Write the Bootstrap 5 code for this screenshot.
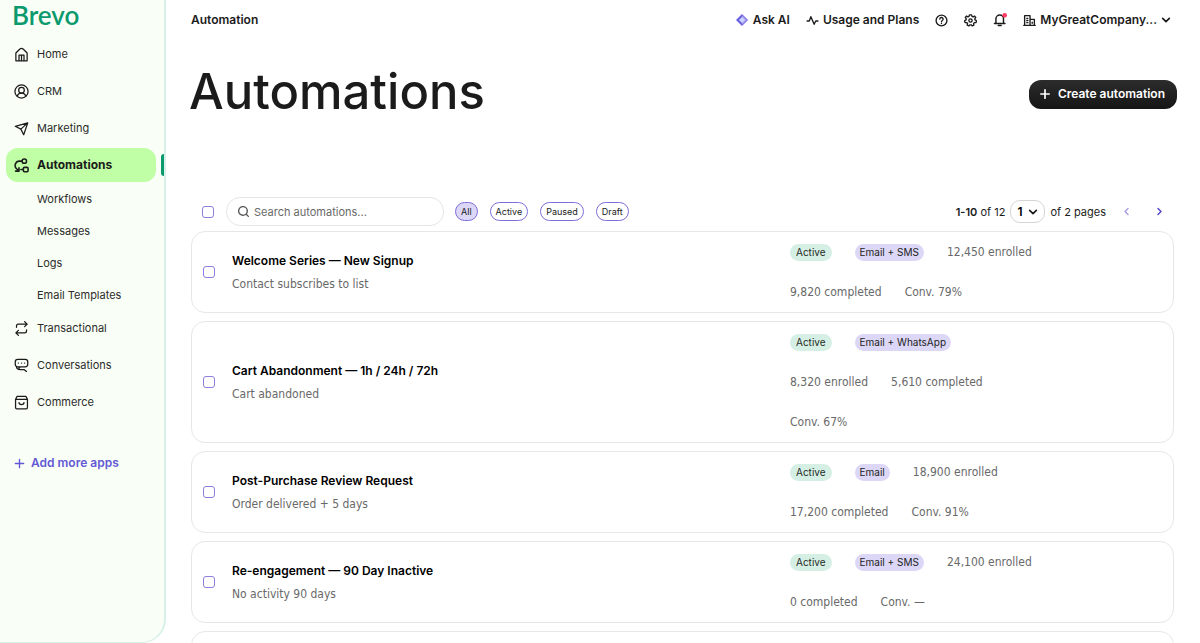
<!DOCTYPE html>
<html lang="en">
<head>
<meta charset="utf-8">
<meta name="viewport" content="width=device-width, initial-scale=1">
<title>Automations</title>
<link href="https://cdn.jsdelivr.net/npm/bootstrap@5.3.0/dist/css/bootstrap.min.css" rel="stylesheet">
<style>
:root { --ink: #1b1b1b; --violet: #6358d4; --green: #0b996e; --grey: #696969; }
body { font-family: Inter, sans-serif; font-size: 12px; line-height: 16px; color: var(--ink); background: #fff; }
a { color: inherit; text-decoration: none; }
button { color: inherit; }
svg { flex: none; display: block; }
.ico { fill: none; stroke: currentColor; stroke-width: 2; stroke-linecap: round; stroke-linejoin: round; }
.ico-bold { stroke-width: 2.5; }
.shell { height: 100vh; }
.sidebar { width: 166px; flex: none; background: #f9fff6; border: solid #d8f1e8; border-width: 0 2px 1px 0; border-radius: 0 0 24px 0; }
.brand { font: 600 26px/30px Lato, sans-serif; color: var(--green); padding-left: 12px; margin-bottom: 7px; }
.side-link { height: 34px; margin: 0 8px 3px 6px; padding: 0 8px; border-radius: 12px; display: flex; align-items: center; gap: 8px; font-size: 11px; color: #2b2b2b; }
.side-link svg { color: var(--ink); }
.side-link.current { background: #c0ffa5; font-weight: 700; font-size: 12px; color: var(--ink); margin-bottom: 0; }
.current-wrap { position: relative; margin: 1px 0; }
.current-wrap::after { content: ""; position: absolute; right: 0; top: 6px; width: 3px; height: 22px; background: var(--green); border-radius: 3px 0 0 3px; }
.sub-link { height: 32px; padding-left: 37px; display: flex; align-items: center; font-size: 11px; color: #2b2b2b; }
.add-apps { color: var(--violet); font-weight: 600; margin-top: 36px; padding-left: 14px; gap: 6px; }
.main { overflow: auto; scrollbar-width: none; padding: 0 23px 0 25px; }
.main::-webkit-scrollbar { display: none; }
.topbar { height: 40px; font-weight: 600; padding-right: 6px; }
.topbar button { font-weight: 600; }
.plain { border: 0; background: none; padding: 0; display: flex; align-items: center; }
.title-row { padding-top: 24px; }
.page-title { font-size: 49px; line-height: 56px; font-weight: 500; margin: 0 0 4px -2px; }
.btn-create { background: linear-gradient(#2c2c2c, #151515); color: #fff; font-size: 12px; line-height: 16px; font-weight: 600; border: 0; border-radius: 12px; padding: 6px 12px 6px 11px; height: 29px; }
.btn-create:hover { background: #333; color: #fff; }
.list-area { margin-top: 73px; padding-right: 3px; }
.toolbar { padding: 0 2px 0 11px; margin-bottom: 5px; }
.tick { width: 12px; height: 12px; margin: 0; border: 1px solid #8c80dd; border-radius: 3px; min-height: 0; flex: none; }
.search { width: 218px; height: 29px; border: 1px solid #e5e5e5; border-radius: 14px; padding: 0 10px; margin-left: 12px; color: #555; }
.search input { border: 0; outline: 0; background: none; padding: 0; font-size: 11px; width: 100%; }
.search input::placeholder { color: var(--grey); opacity: 1; }
.filters { gap: 12px; margin-left: 11px; }
.filter { border: 1px solid #7b70d8; border-radius: 10px; background: #fff; height: 19px; font-size: 9px; line-height: 16px; padding: 0 5px; }
.filter.on { background: #dcd7f7; }
.pager { font-size: 11px; }
.page-pick { width: 35px; height: 23px; border: 1px solid #d5d5d5; border-radius: 10px; background: #fff; font-weight: 600; font-size: 12px; padding-left: 6px; appearance: none; }
.pick-wrap { position: relative; margin: 0 5px; }
.pick-wrap svg { position: absolute; right: 7px; top: 7px; pointer-events: none; }
.pager .prev { color: #a9a0e6; }
.pager .next { color: #5348c8; }
.flow { border: 1px solid #e7e7e7; border-radius: 14px; min-height: 82px; padding: 0 11px; gap: 17px; }
.flow-name { font-size: 12px; line-height: 24px; font-weight: 600; margin: 0; color: #000; }
.flow-trigger, .stat { font-family: "DejaVu Sans Condensed", "DejaVu Sans", sans-serif; font-size: 12px; color: var(--grey); }
.flow-trigger { line-height: 22px; margin: 0; }
.facts { width: 250px; flex: none; column-gap: 23px; row-gap: 16px; padding: 8px 0; margin-right: 122px; }
.facts > * { height: 24px; display: flex; align-items: center; }
.tag { font-size: 10px; line-height: 17px; border-radius: 9px; padding: 0 5px; color: #1f2b27; }
.tag-on { background: #d6efe5; padding: 0 6px; }
.tag-channel { background: #dcd7f7; color: #222; }
</style>
</head>
<body>
<div class="shell d-flex">
  <aside class="sidebar">
    <div class="brand"><a href="#">Brevo</a></div>
    <nav aria-label="Apps">
      <a class="side-link" href="#"><svg class="ico" width="15" height="15" viewBox="0 0 24 24"><path d="M3 9.500 9 3.500q3-2.500 6 0l6 6V22H3zM8 22v-9h8v9M12 13v9"/></svg>Home</a>
      <a class="side-link" href="#"><svg class="ico" width="15" height="15" viewBox="0 0 24 24"><circle cx="12" cy="12" r="10.500"/><circle cx="12" cy="10" r="4.500"/><path d="M5 19c1.500-3 4-4.500 7-4.500s5.500 1.500 7 4.500"/></svg>CRM</a>
      <a class="side-link" href="#"><svg class="ico" width="15" height="15" viewBox="0 0 24 24"><path d="M22 3 2 8.500l9 4.500 4.500 9zM22 3 11 13"/></svg>Marketing</a>
      <div class="current-wrap">
        <a class="side-link current" href="#" aria-current="page"><svg class="ico ico-bold" width="15" height="15" viewBox="0 0 24 24"><circle cx="16.500" cy="5" r="3.500"/><rect x="15" y="15" width="7.500" height="7" rx="1.500"/><path d="M13 5H9a7 7 0 0 0-4.500 12.500L8 21M8 15.500V21H2.500M11 18.500h4"/></svg>Automations</a>
      </div>
      <a class="sub-link" href="#">Workflows</a>
      <a class="sub-link" href="#">Messages</a>
      <a class="sub-link" href="#">Logs</a>
      <a class="sub-link" href="#">Email Templates</a>
      <a class="side-link" href="#"><svg class="ico" width="15" height="15" viewBox="0 0 24 24"><path d="M4 10V8a3 3 0 0 1 3-3h14M17 1l4 4-4 4M20 14v2a3 3 0 0 1-3 3H3M7 15l-4 4 4 4"/></svg>Transactional</a>
      <a class="side-link" href="#"><svg class="ico" width="15" height="15" viewBox="0 0 24 24"><path d="M6 2h12a4 4 0 0 1 4 4v4a4 4 0 0 1-4 4H6a4 4 0 0 1-4-4V6a4 4 0 0 1 4-4zM4 14c0 4 3 4.500 6 4.500h6l4 3M10 14.500c-2 0-3 2-1 4M7 8h.1M12 8h.1M17 8h.1"/></svg>Conversations</a>
      <a class="side-link" href="#"><svg class="ico" width="15" height="15" viewBox="0 0 24 24"><path d="M2.500 7 5 2h14l2.500 5v13a2 2 0 0 1-2 2h-15a2 2 0 0 1-2-2zM2.500 7h19M8 12c0 4.500 8 4.500 8 0"/></svg>Commerce</a>
      <a class="add-apps d-flex align-items-center" href="#"><svg class="ico" width="11" height="11" viewBox="0 0 16 16"><path d="M8 2v12M2 8h12"/></svg>Add more apps</a>
    </nav>
  </aside>

  <main class="main flex-grow-1">
    <header class="topbar d-flex align-items-center justify-content-between">
      <span>Automation</span>
      <div class="d-flex align-items-center gap-3">
        <button class="plain gap-1" type="button"><svg width="14" height="14" viewBox="0 0 14 14"><path d="m7 1 6 6-6 6-6-6z" fill="#6a5fe0"/><path d="m7 2 5 5-5 5z" fill="#a79cf0"/><path d="m7 4 3 3-3 3-3-3z" fill="#c9d5ff"/></svg>Ask AI</button>
        <button class="plain gap-1" type="button"><svg class="ico ico-bold" width="13" height="13" viewBox="0 0 24 24"><path d="M2 13h4L9 5l6 14 3-6h4"/></svg>Usage and Plans</button>
        <button class="plain" type="button" aria-label="Help"><svg class="ico ico-bold" width="13" height="13" viewBox="0 0 24 24"><circle cx="12" cy="12" r="10"/><path d="M9 9.500a3 3 0 1 1 4.500 2.500q-1.500.8-1.500 2.500M12 17.500v.1"/></svg></button>
        <button class="plain" type="button" aria-label="Settings"><svg class="ico ico-bold" width="13" height="13" viewBox="0 0 24 24"><path d="m10 1.500-.8 3-2 .9-2.800-1.600-2 2.500L4.200 9l-.6 2-2.600 1.500 1 3.200 3 .1 1.500 1.700-.5 3 3 1.500 2.200-2h2l2 2 3-1.500-.4-3 1.400-1.700 3-.1 1-3.200L20.500 11l-.6-2 1.700-2.700-2-2.500-2.800 1.600-2-.9-.8-3z"/><circle cx="12" cy="12" r="3"/></svg></button>
        <button class="plain" type="button" aria-label="Notifications"><svg width="14" height="14" viewBox="0 0 24 24"><path class="ico ico-bold" d="M2.500 18h18M5 18V10a6.500 6.500 0 0 1 13 0v8M9 21.500h5"/><circle cx="20" cy="4" r="4" fill="#ff3b62"/></svg></button>
        <button class="plain gap-1" type="button"><svg class="ico ico-bold" width="13" height="13" viewBox="0 0 24 24"><path d="M3 21V3h10v18M13 10h8v11M1.500 21h21M7 8h2M7 12h2M7 16h2M17 15v2"/></svg><span>MyGreatCompany...</span><svg class="ico" width="10" height="10" viewBox="0 0 12 12"><path d="m2 4 4 4 4-4"/></svg></button>
      </div>
    </header>

    <div class="title-row d-flex align-items-center justify-content-between">
      <h1 class="page-title">Automations</h1>
      <button class="btn btn-create d-flex align-items-center gap-2" type="button"><svg class="ico" width="10" height="10" viewBox="0 0 12 12"><path d="M6 1v10M1 6h10"/></svg>Create automation</button>
    </div>

    <section class="list-area">
      <div class="toolbar d-flex align-items-center">
        <input class="form-check-input tick" type="checkbox" aria-label="Select all">
        <label class="search d-flex align-items-center gap-1"><svg class="ico ico-bold" width="13" height="13" viewBox="0 0 24 24"><circle cx="11" cy="11" r="8"/><path d="m17 17 4 4"/></svg><input type="text" placeholder="Search automations..." aria-label="Search automations"></label>
        <div class="filters d-flex">
          <button class="filter on" type="button">All</button>
          <button class="filter" type="button">Active</button>
          <button class="filter" type="button">Paused</button>
          <button class="filter" type="button">Draft</button>
        </div>
        <div class="pager d-flex align-items-center ms-auto">
          <span><b class="fw-semibold">1-10</b> of 12</span>
          <span class="pick-wrap"><select class="page-pick" aria-label="Page"><option>1</option><option>2</option></select><svg class="ico" width="10" height="10" viewBox="0 0 12 12"><path d="m2 4 4 4 4-4"/></svg></span>
          <span>of 2 pages</span>
          <button class="plain prev ms-3" type="button" aria-label="Previous page"><svg class="ico" width="9" height="9" viewBox="0 0 12 12"><path d="M8 2 4 6l4 4"/></svg></button>
          <button class="plain next ms-4 me-2" type="button" aria-label="Next page"><svg class="ico" width="9" height="9" viewBox="0 0 12 12"><path d="m4 2 4 4-4 4"/></svg></button>
        </div>
      </div>

      <div class="d-flex flex-column gap-2">
        <article class="flow d-flex align-items-center">
          <input class="form-check-input tick" type="checkbox" aria-label="Select Welcome Series">
          <div class="flex-grow-1"><h2 class="flow-name">Welcome Series — New Signup</h2><p class="flow-trigger">Contact subscribes to list</p></div>
          <div class="facts d-flex flex-wrap"><span><span class="tag tag-on">Active</span></span><span><span class="tag tag-channel">Email + SMS</span></span><span class="stat">12,450 enrolled</span><span class="stat">9,820 completed</span><span class="stat">Conv. 79%</span></div>
        </article>
        <article class="flow d-flex align-items-center">
          <input class="form-check-input tick" type="checkbox" aria-label="Select Cart Abandonment">
          <div class="flex-grow-1"><h2 class="flow-name">Cart Abandonment — 1h / 24h / 72h</h2><p class="flow-trigger">Cart abandoned</p></div>
          <div class="facts d-flex flex-wrap"><span><span class="tag tag-on">Active</span></span><span><span class="tag tag-channel">Email + WhatsApp</span></span><span class="stat">8,320 enrolled</span><span class="stat">5,610 completed</span><span class="stat">Conv. 67%</span></div>
        </article>
        <article class="flow d-flex align-items-center">
          <input class="form-check-input tick" type="checkbox" aria-label="Select Post-Purchase Review Request">
          <div class="flex-grow-1"><h2 class="flow-name">Post-Purchase Review Request</h2><p class="flow-trigger">Order delivered + 5 days</p></div>
          <div class="facts d-flex flex-wrap"><span><span class="tag tag-on">Active</span></span><span><span class="tag tag-channel">Email</span></span><span class="stat">18,900 enrolled</span><span class="stat">17,200 completed</span><span class="stat">Conv. 91%</span></div>
        </article>
        <article class="flow d-flex align-items-center">
          <input class="form-check-input tick" type="checkbox" aria-label="Select Re-engagement">
          <div class="flex-grow-1"><h2 class="flow-name">Re-engagement — 90 Day Inactive</h2><p class="flow-trigger">No activity 90 days</p></div>
          <div class="facts d-flex flex-wrap"><span><span class="tag tag-on">Active</span></span><span><span class="tag tag-channel">Email + SMS</span></span><span class="stat">24,100 enrolled</span><span class="stat">0 completed</span><span class="stat">Conv. —</span></div>
        </article>
        <article class="flow"></article>
      </div>
    </section>
  </main>
</div>
<script src="https://cdn.jsdelivr.net/npm/bootstrap@5.3.0/dist/js/bootstrap.bundle.min.js"></script>
</body>
</html>
